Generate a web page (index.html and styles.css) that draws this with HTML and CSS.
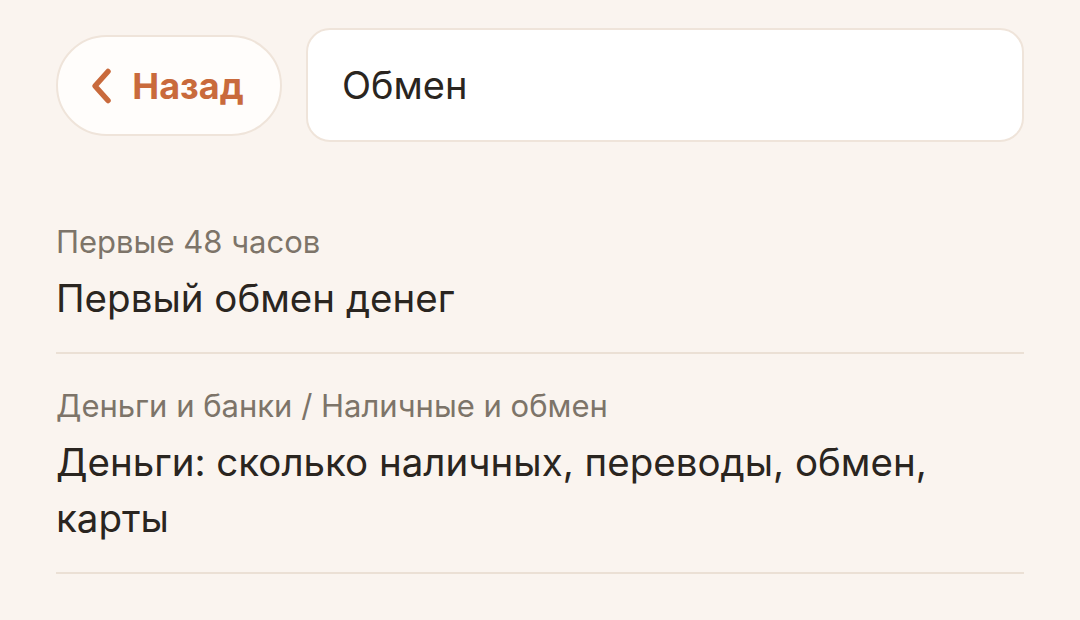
FILE: index.html
```html
<!DOCTYPE html>
<html>

<head>
  <meta charset="utf-8" />
  <title>Поиск</title>
  <link rel="stylesheet" href="styles.css">
</head>

<body>
  <div class="page">
    <div class="search-bar">
      <button class="back-btn">
        <svg class="back-icon" viewBox="0 0 22 38" width="22" height="38">
          <path d="M18 4.5 L5 19 L18 33.5" fill="none" stroke="currentColor" stroke-width="5.5" stroke-linecap="round" stroke-linejoin="round" />
        </svg>
        <span>Назад</span>
      </button>
      <div class="search-field">Обмен</div>
    </div>

    <ul class="results">
      <li class="result">
        <div class="result-path">Первые 48 часов</div>
        <div class="result-title">Первый обмен денег</div>
      </li>
      <li class="result">
        <div class="result-path">Деньги и банки / Наличные и обмен</div>
        <div class="result-title">Деньги: сколько наличных, переводы, обмен, карты</div>
      </li>
    </ul>
  </div>
</body>

</html>
```

FILE: styles.css
```css
* {
  box-sizing: border-box;
}

body {
  margin: 0;
  background: #faf4ef;
  font-family: Inter, Roboto, "Noto Sans", sans-serif;
  color: #2a2520;
}

.page {
  padding: 28px 56px 0;
}

.search-bar {
  display: flex;
  align-items: flex-start;
  gap: 24px;
}

.back-btn {
  margin-top: 7px;
  width: 226px;
  height: 101px;
  display: flex;
  align-items: center;
  justify-content: center;
  gap: 20px;
  padding: 0 4px 0 0;
  background: #fffdfb;
  border: 2px solid #efe4da;
  border-radius: 51px;
  color: #c96a3c;
  font-family: inherit;
  font-size: 36px;
  font-weight: 700;
}

.back-icon {
  display: block;
}

.search-field {
  flex: 1;
  height: 114px;
  display: flex;
  align-items: center;
  padding: 0 34px;
  background: #fff;
  border: 2px solid #efe4da;
  border-radius: 24px;
  font-size: 38px;
}

.results {
  list-style: none;
  margin: 48px 0 0;
  padding: 0;
}

.result {
  padding: 34px 0 26px;
  border-bottom: 2px solid #ebe0d5;
}

.result-path {
  font-size: 31px;
  line-height: 36px;
  color: #7d7469;
}

.result-title {
  margin-top: 10px;
  font-size: 38.5px;
  line-height: 56px;
  color: #2a2520;
}
```
